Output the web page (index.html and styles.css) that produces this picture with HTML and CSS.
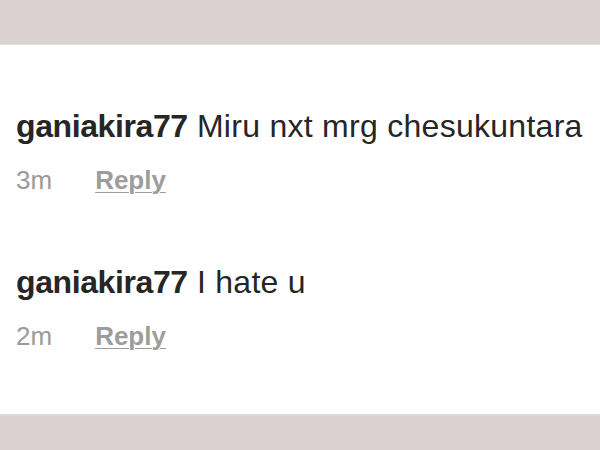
FILE: index.html
```html
<!DOCTYPE html>
<html lang="en">
<head>
  <meta charset="UTF-8">
  <meta name="viewport" content="width=device-width, initial-scale=1.0">
  <title>Comments</title>
  <link rel="stylesheet" href="styles.css">
</head>
<body>
  <div class="screen">
    <div class="band band-top"></div>

    <main class="comments">
      <div class="comment">
        <p class="comment-text"><span class="user">ganiakira77</span> Miru nxt mrg chesukuntara</p>
        <div class="meta">
          <span class="time">3m</span>
          <a class="reply">Reply</a>
        </div>
      </div>

      <div class="comment">
        <p class="comment-text"><span class="user">ganiakira77</span> I hate u</p>
        <div class="meta">
          <span class="time">2m</span>
          <a class="reply">Reply</a>
        </div>
      </div>
    </main>

    <div class="band band-bottom"></div>
  </div>
</body>
</html>
```

FILE: styles.css
```css
/* Comment thread screenshot */
* {
  margin: 0;
  padding: 0;
  box-sizing: border-box;
}

body {
  font-family: "Liberation Sans", Arial, sans-serif;
  background-color: #fff;
  color: #262626;
}

.screen {
  display: flex;
  flex-direction: column;
  width: 600px;
  height: 450px;
}

.band {
  background-color: #dad1d0;
}

.band-top {
  height: 45px;
  border-bottom: 1px solid #e3dcdb;
}

.band-bottom {
  height: 36px;
  border-top: 2px solid #e2dada;
}

.comments {
  flex: 1;
  display: flex;
  flex-direction: column;
  gap: 66px;
  padding: 61px 0 0 16px;
}

.comment {
  display: flex;
  flex-direction: column;
  gap: 18px;
}

.comment-text {
  font-size: 32px;
  line-height: 40px;
  letter-spacing: 0.28px;
  white-space: nowrap;
}

.user {
  font-weight: bold;
  letter-spacing: -0.4px;
}

.meta {
  display: flex;
  gap: 43px;
  font-size: 26px;
  line-height: 32px;
  color: #9a9a9a;
}

.reply {
  font-weight: bold;
  color: #9d9d9d;
  text-decoration: underline;
  text-underline-offset: 3px;
  text-decoration-thickness: 1px;
  cursor: pointer;
}
```
